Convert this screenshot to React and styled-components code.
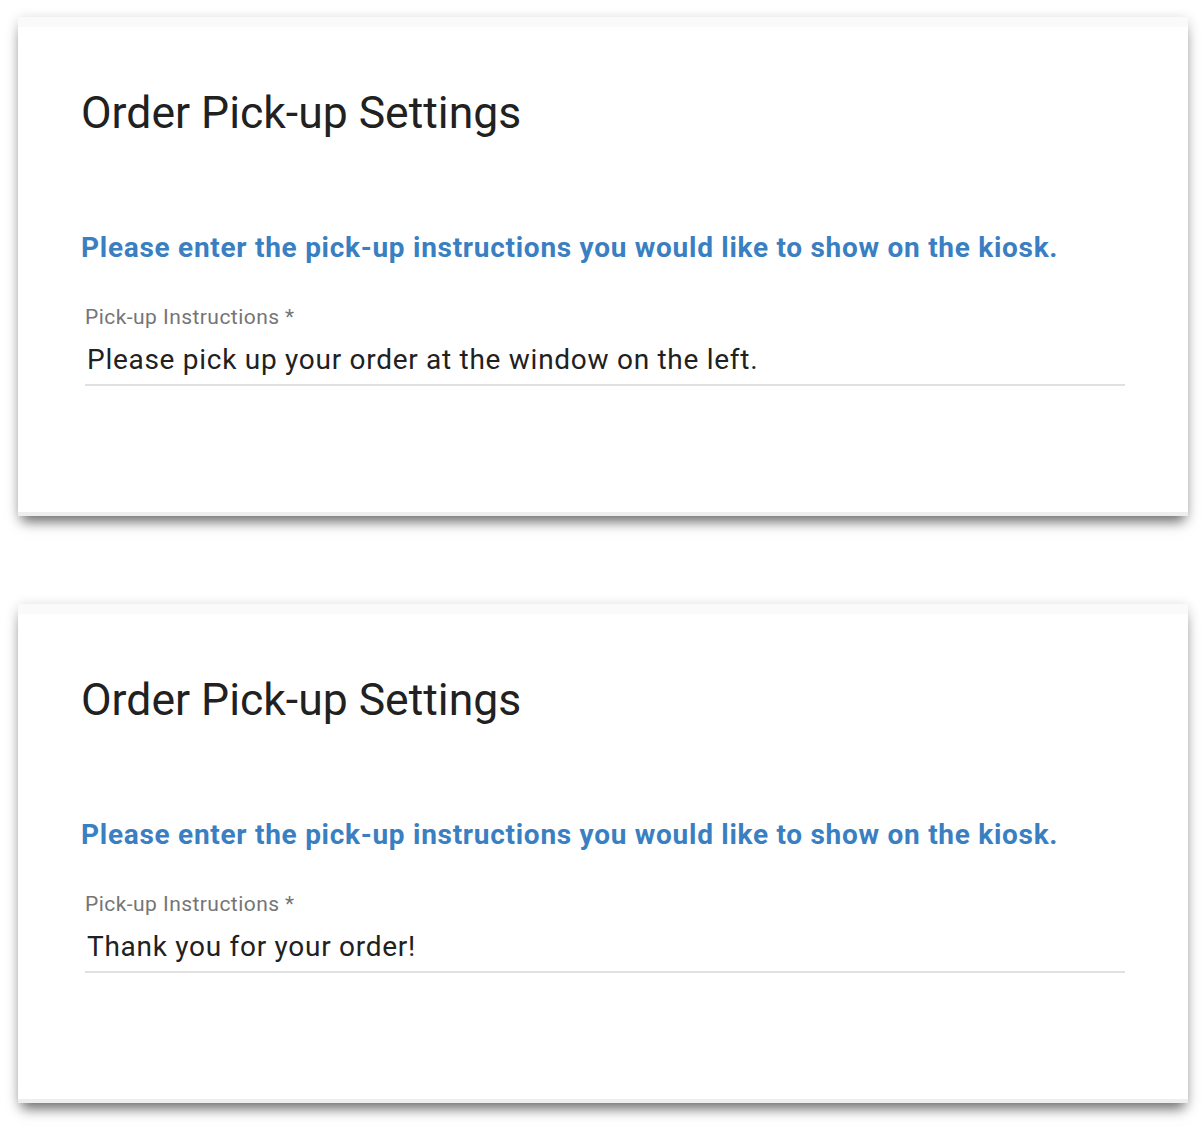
import React from 'react';
import styled, { createGlobalStyle } from 'styled-components';

const GlobalStyle = createGlobalStyle`
  body {
    margin: 0;
    background: #ffffff;
    font-family: Roboto, 'Noto Sans', sans-serif;
  }
`;

const Page = styled.div`
  display: flex;
  flex-direction: column;
  gap: 88px;
  padding: 17px 16px 24px 18px;
`;

const Card = styled.section`
  width: 1170px;
  height: 499px;
  box-sizing: border-box;
  background: #ffffff;
  display: flex;
  flex-direction: column;
  box-shadow: 0 10px 12px -4px rgba(0, 0, 0, 0.5), 0 2px 12px rgba(0, 0, 0, 0.16);
  border-bottom: 4px solid #eeeeee;
`;

const TopBand = styled.div`
  height: 10px;
  background: #fafafa;
`;

const Body = styled.div`
  padding: 58px 62px 0 63px;
  display: flex;
  flex-direction: column;
`;

const Title = styled.h1`
  margin: 0;
  font-size: 44.5px;
  font-weight: 400;
  line-height: 56px;
  color: #212121;
`;

const Prompt = styled.h2`
  margin: 90px 0 0 0;
  font-size: 28px;
  font-weight: 700;
  letter-spacing: 0.72px;
  line-height: 1.2;
  color: #3a7fc1;
`;

const Field = styled.label`
  display: flex;
  flex-direction: column;
  margin: 40px 0 0 4px;
  width: 1040px;
  border-bottom: 2px solid #e0e0e0;
`;

const FieldLabel = styled.span`
  font-size: 21px;
  letter-spacing: 0.45px;
  line-height: 1.2;
  color: #757575;
`;

const Input = styled.input`
  margin-top: 10px;
  padding: 0 0 4px 2px;
  border: none;
  outline: none;
  background: transparent;
  font-family: Roboto, 'Noto Sans', sans-serif;
  font-size: 28px;
  letter-spacing: 0.72px;
  line-height: 1.2;
  height: 40px;
  color: #212121;
`;

const SettingsCard = ({ value }) => (
  <Card>
    <TopBand />
    <Body>
      <Title>Order Pick-up Settings</Title>
      <Prompt>Please enter the pick-up instructions you would like to show on the kiosk.</Prompt>
      <Field>
        <FieldLabel>Pick-up Instructions *</FieldLabel>
        <Input defaultValue={value} />
      </Field>
    </Body>
  </Card>
);

export default function App() {
  return (
    <>
      <GlobalStyle />
      <Page>
        <SettingsCard value="Please pick up your order at the window on the left." />
        <SettingsCard value="Thank you for your order!" />
      </Page>
    </>
  );
}
